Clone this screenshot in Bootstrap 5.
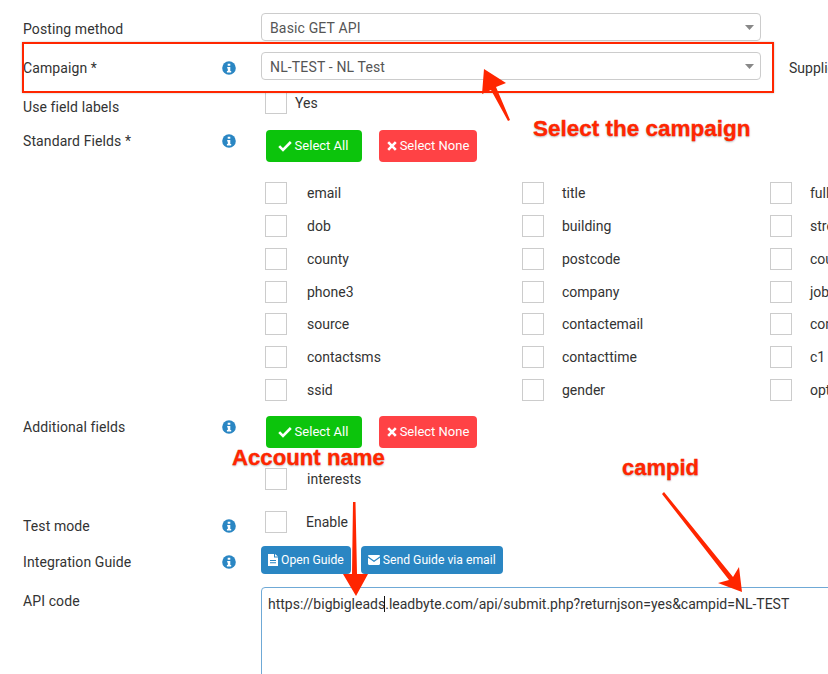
<!DOCTYPE html>
<html lang="en">
<head>
<meta charset="utf-8">
<title>API posting</title>
<link href="https://cdn.jsdelivr.net/npm/bootstrap@5.3.0/dist/css/bootstrap.min.css" rel="stylesheet">
<style>
html,body{width:828px;height:674px;overflow:hidden;background:#fff}
body{font-family:Roboto,"Liberation Sans",sans-serif;font-size:14px;color:#333;position:relative}
.sheet{width:1100px;padding:13px 0 0 23px}
.frow{display:flex;align-items:flex-start}
.lbl{width:238px;flex:none;display:flex;justify-content:space-between;padding-right:25px;line-height:20px;color:#333;letter-spacing:.1px}
.lbl svg{margin-top:3px;flex:none}
.r1{height:39px}.r1 .lbl{padding-top:6px}
.r2{height:41px}.r2 .lbl{padding-top:6px}
.r3{height:37px}.r3 .lbl{padding-top:4px}
.r3 .opt{margin-top:-1px}
.r4{height:52px}.r4 .lbl{padding-top:1px}
.sel.form-select{width:500px;height:28px;padding:1px 24px 0 8px;font-size:14px;line-height:26px;color:#555;border-color:#ccc;border-radius:4px;letter-spacing:.15px;background-size:9px 5px;background-position:right 6px center;background-image:url("data:image/svg+xml,%3Csvg xmlns='http://www.w3.org/2000/svg' viewBox='0 0 9 5'%3E%3Cpath d='M0 0h9L4.5 5z' fill='%23888'/%3E%3C/svg%3E")}
.other{margin-left:28px;line-height:20px;padding-top:6px;white-space:nowrap}
.box{display:block;width:22px;height:22px;border:1px solid #ccc;background:#fff;flex:none}
.opt{display:flex;align-items:center;height:22px;white-space:nowrap}
.yes{padding-left:4px}.yes span{margin:1px 0 0 8px}
.acts{padding-left:5px;display:flex;gap:17px}
.act.btn{height:32px;padding:0 2px 0 0;width:96px;font-size:13px;color:#fff;border:0;border-radius:4px;display:flex;align-items:center;justify-content:center;gap:3px}
.go,.go:hover{background:#0cc40c}
.no,.no:hover{background:#ff4245}
.act.no{width:98px;padding:0}
.fields{display:grid;grid-template-columns:257px 248px 120px;grid-auto-rows:22px;row-gap:10.8px;align-content:start;height:233.800px;padding-top:.2px;box-sizing:content-box;margin-left:242px;width:700px}
.fields .opt span{margin:1px 0 0 18px}
.fields .opt.first span{margin-left:20px}
.r6{height:52px}
.r7{height:43px}
.r7 .opt{margin-left:4px}.r7 .opt span{margin:1px 0 0 20px}
.r8{height:35px}
.r8 .opt{margin-left:4px}.r8 .opt span{margin:1px 0 0 19px}
.r9{height:41px}
.r6 .lbl{padding-top:1px}
.r8 .lbl{padding-top:5px}
.r9 .lbl{padding-top:6px}
.r10 .lbl{padding-top:4px}
.guide{display:flex;gap:10px}
.blue.btn{height:28px;padding:0 7px;font-size:12.2px;color:#fff;background:#2a86c3;border:0;border-radius:4px;display:flex;align-items:center;gap:3px;white-space:nowrap}
.code{width:640px;height:130px;padding:6px 6px;border:1px solid #6fa9d6;border-radius:4px;color:#333;font-size:14px;line-height:20px;white-space:nowrap}
.cursor{border-left:1px solid #111;margin-left:-1px}
.note{position:absolute;font-family:"Liberation Sans",sans-serif;font-weight:700;font-size:22.5px;line-height:24px;color:#ff2600;white-space:nowrap;-webkit-text-stroke:.3px #ff2600;text-shadow:0 1px 2px rgba(0,0,0,.3),0 0 2px #fff,0 0 3px #fff}
.n1{left:533px;top:117px}
.n2{left:232px;top:446px;font-size:22.2px}
.n3{left:622px;top:456px;font-size:22px}
.redbox{position:absolute;left:22px;top:42px;width:752px;height:51px;border:2px solid #ff2600;box-shadow:0 0 2px rgba(0,0,0,.25);pointer-events:none}
.marks{position:absolute;left:0;top:0;pointer-events:none}
</style>
</head>
<body>
<svg width="0" height="0" class="d-none" aria-hidden="true">
<symbol id="info" viewBox="0 0 14 14"><circle cx="7" cy="7" r="6.8" fill="#2a86c3"/><path d="M5.700 2.700h2.600v2H5.700zM5.200 6h3.100v4h.9v1.400H4.900V10h.9V7.400h-.6z" fill="#fff"/></symbol>
<symbol id="tick" viewBox="0 0 14 12"><path d="M1.200 6.200 5 10 12.800 2" fill="none" stroke="#fff" stroke-width="2.600"/></symbol>
<symbol id="cross" viewBox="0 0 10 10"><path d="M1.200 1.200l7.600 7.600M8.800 1.200l-7.600 7.600" fill="none" stroke="#fff" stroke-width="2.600"/></symbol>
<symbol id="file" viewBox="0 0 10 12"><path d="M0 0h6v3.500h4V12H0zM7 0l3 2.600H7zM2 6v1h6V6zM2 8.200v1h6v-1z" fill="#fff" fill-rule="evenodd"/></symbol>
<symbol id="mail" viewBox="0 0 12 10"><path d="M0 1.200C0 .5.500 0 1.200 0h9.600C11.500 0 12 .5 12 1.200L6 5.400zM0 2.800V8.800C0 9.500.5 10 1.200 10h9.600c.7 0 1.200-.5 1.200-1.200V2.800L6 7z" fill="#fff"/></symbol>
</svg>

<form class="sheet" onsubmit="return false">
  <div class="frow r1">
    <div class="lbl"><span>Posting method</span></div>
    <select class="form-select sel"><option>Basic GET API</option></select>
  </div>
  <div class="frow r2">
    <div class="lbl"><span>Campaign *</span><svg width="14" height="14"><use href="#info"/></svg></div>
    <select class="form-select sel"><option>NL-TEST - NL Test</option></select>
    <div class="other">Supplier</div>
  </div>
  <div class="frow r3">
    <div class="lbl"><span>Use field labels</span></div>
    <label class="opt yes"><i class="box"></i><span>Yes</span></label>
  </div>
  <div class="frow r4">
    <div class="lbl"><span>Standard Fields *</span><svg width="14" height="14"><use href="#info"/></svg></div>
    <div class="acts">
      <button class="btn act go" type="button"><svg width="14" height="12"><use href="#tick"/></svg>Select All</button>
      <button class="btn act no" type="button"><svg width="10" height="10"><use href="#cross"/></svg>Select None</button>
    </div>
  </div>
  <div class="fields">
    <label class="opt first"><i class="box"></i><span>email</span></label><label class="opt"><i class="box"></i><span>title</span></label><label class="opt"><i class="box"></i><span>fullname</span></label>
    <label class="opt first"><i class="box"></i><span>dob</span></label><label class="opt"><i class="box"></i><span>building</span></label><label class="opt"><i class="box"></i><span>street</span></label>
    <label class="opt first"><i class="box"></i><span>county</span></label><label class="opt"><i class="box"></i><span>postcode</span></label><label class="opt"><i class="box"></i><span>country</span></label>
    <label class="opt first"><i class="box"></i><span>phone3</span></label><label class="opt"><i class="box"></i><span>company</span></label><label class="opt"><i class="box"></i><span>jobtitle</span></label>
    <label class="opt first"><i class="box"></i><span>source</span></label><label class="opt"><i class="box"></i><span>contactemail</span></label><label class="opt"><i class="box"></i><span>contactphone</span></label>
    <label class="opt first"><i class="box"></i><span>contactsms</span></label><label class="opt"><i class="box"></i><span>contacttime</span></label><label class="opt"><i class="box"></i><span>c1</span></label>
    <label class="opt first"><i class="box"></i><span>ssid</span></label><label class="opt"><i class="box"></i><span>gender</span></label><label class="opt"><i class="box"></i><span>optin</span></label>
  </div>
  <div class="frow r6">
    <div class="lbl"><span>Additional fields</span><svg width="14" height="14"><use href="#info"/></svg></div>
    <div class="acts">
      <button class="btn act go" type="button"><svg width="14" height="12"><use href="#tick"/></svg>Select All</button>
      <button class="btn act no" type="button"><svg width="10" height="10"><use href="#cross"/></svg>Select None</button>
    </div>
  </div>
  <div class="frow r7">
    <div class="lbl"></div>
    <label class="opt"><i class="box"></i><span>interests</span></label>
  </div>
  <div class="frow r8">
    <div class="lbl"><span>Test mode</span><svg width="14" height="14"><use href="#info"/></svg></div>
    <label class="opt"><i class="box"></i><span>Enable</span></label>
  </div>
  <div class="frow r9">
    <div class="lbl"><span>Integration Guide</span><svg width="14" height="14"><use href="#info"/></svg></div>
    <div class="guide">
      <button class="btn blue" type="button"><svg width="10" height="12"><use href="#file"/></svg>Open Guide</button>
      <button class="btn blue" type="button"><svg width="12" height="10"><use href="#mail"/></svg>Send Guide via email</button>
    </div>
  </div>
  <div class="frow r10">
    <div class="lbl"><span>API code</span></div>
    <div class="code">https://bigbigleads<span class="cursor"></span>.leadbyte.com/api/submit.php?returnjson=yes&amp;campid=NL-TEST</div>
  </div>
</form>

<div class="redbox"></div>
<svg class="marks" width="828" height="674" viewBox="0 0 828 674" aria-hidden="true">
  <g fill="#ff2600">
    <path d="M484 69 506 83 496 87 510 120 508 121 491 90 482 94z"/>
    <path d="M353 502h2.500L357 574h11L356 596 343 574h9z"/>
    <path d="M664 492 733 577 739 567 742 592 718 583 729 580 662 494z"/>
  </g>
</svg>
<div class="note n1">Select the campaign</div>
<div class="note n2">Account name</div>
<div class="note n3">campid</div>
</body>
</html>
